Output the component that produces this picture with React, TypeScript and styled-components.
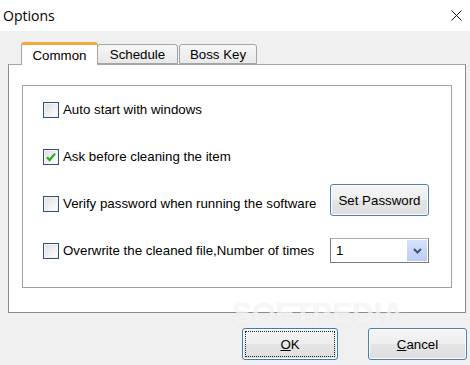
import React from "react";
import styled, { createGlobalStyle } from "styled-components";

const GlobalStyle = createGlobalStyle`
  html, body {
    margin: 0;
    padding: 0;
    background: #f0f0f0;
  }
  body {
    font-family: "Liberation Sans", Arial, sans-serif;
    font-size: 13.3px;
    color: #000;
  }
`;

const Window = styled.div`
  position: relative;
  width: 470px;
  height: 365px;
  display: flex;
  flex-direction: column;
  background: #f0f0f0;
  overflow: hidden;
`;

const TitleBar = styled.div`
  height: 31px;
  flex-shrink: 0;
  background: #fff;
  display: flex;
  align-items: center;
  justify-content: space-between;
  padding: 0 8px 0 3px;
`;

const Title = styled.span`
  font-family: "Open Sans", "Noto Sans", sans-serif;
  font-size: 14px;
  color: #000;
`;

const CloseBtn = styled.div`
  width: 12px;
  height: 12px;
  display: flex;
  align-items: center;
  justify-content: center;
`;

const Body = styled.div`
  flex: 1;
  display: flex;
  flex-direction: column;
  padding: 11px 4px 0 8px;
`;

const TabStrip = styled.div`
  display: flex;
  align-items: flex-end;
  height: 22px;
  padding-left: 13px;
  position: relative;
  z-index: 1;
`;

const Tab = styled.div<{ $active?: boolean; $w: number }>`
  box-sizing: border-box;
  height: ${(p) => (p.$active ? "23px" : "20px")};
  margin-bottom: ${(p) => (p.$active ? "-1px" : "0")};
  width: ${(p) => p.$w}px;
  display: flex;
  align-items: center;
  justify-content: center;
  border: 1px solid #a5a5a5;
  border-bottom: ${(p) => (p.$active ? "none" : "1px solid #a5a5a5")};
  border-top: ${(p) => (p.$active ? "3px solid #f4a93c" : "1px solid #a5a5a5")};
  border-radius: 3px 3px 0 0;
  background: ${(p) =>
    p.$active ? "#fff" : "linear-gradient(#f7f7f7, #e8e8e8)"};
  padding-top: ${(p) => (p.$active ? "0" : "1px")};
  margin-right: ${(p) => (p.$active ? "-1px" : "1px")};
`;

const Panel = styled.div`
  box-sizing: border-box;
  width: 458px;
  height: 249px;
  background: #fff;
  border: 1px solid #898c95;
  border-top-color: #a5a5a5;
  padding: 20px 13px 0 13px;
`;

const GroupBox = styled.div`
  box-sizing: border-box;
  width: 430px;
  height: 203px;
  border: 1px solid #a0a0a0;
  box-shadow: inset 1px 1px 0 #fff;
  display: flex;
  flex-direction: column;
  padding-left: 20px;
  padding-right: 22px;
`;

const Row = styled.div<{ $lift?: number }>`
  height: 47px;
  display: flex;
  align-items: center;
  justify-content: space-between;

  & > button {
    margin-top: ${(p) => -(p.$lift ?? 0)}px;
  }
`;

const CheckLabel = styled.label`
  display: flex;
  align-items: center;
  gap: 4px;
  white-space: nowrap;
`;

const Box = styled.span`
  box-sizing: border-box;
  width: 16px;
  height: 16px;
  border: 1px solid #33507a;
  background: linear-gradient(135deg, #dcdcdc, #f6f6f6 70%, #ffffff);
  box-shadow: inset 0 0 0 1px #f4f4f4;
  display: flex;
  align-items: center;
  justify-content: center;
`;

const PushButton = styled.button<{ $w: number; $focus?: boolean }>`
  box-sizing: border-box;
  width: ${(p) => p.$w}px;
  height: 32px;
  border: 1px solid ${(p) => (p.$focus ? "#3c7fb1" : "#4d7fb0")};
  border-radius: 3px;
  background: linear-gradient(#f5f5f5, #eeeeee 50%, #e5e5e5 51%, #dedede);
  box-shadow: inset 0 0 0 1px #fcfcfc;
  font-family: "Liberation Sans", Arial, sans-serif;
  font-size: 13.3px;
  color: #000;
  padding: 2px;
  display: flex;
  align-items: stretch;
  justify-content: stretch;
`;

const FocusRect = styled.span<{ $on?: boolean }>`
  flex: 1;
  display: flex;
  align-items: center;
  justify-content: center;
  border: 1px dotted ${(p) => (p.$on ? "#222" : "transparent")};
`;

const Combo = styled.div`
  box-sizing: border-box;
  width: 99px;
  height: 25px;
  border: 1px solid #7a7a7a;
  border-top-color: #abadb3;
  background: #fff;
  display: flex;
  align-items: stretch;
  padding: 1px;
`;

const ComboValue = styled.span`
  flex: 1;
  display: flex;
  align-items: center;
  padding-left: 4px;
`;

const ComboArrow = styled.span`
  width: 20px;
  display: flex;
  align-items: center;
  justify-content: center;
  background: linear-gradient(#d6e3fb, #b9cdf5);
`;

const Footer = styled.div`
  display: flex;
  justify-content: flex-end;
  gap: 30px;
  padding-top: 15px;
  margin-right: -1px;
`;

const Watermark = styled.div`
  position: absolute;
  left: 232px;
  top: 296px;
  font-family: "Liberation Sans", Arial, sans-serif;
  font-weight: bold;
  font-size: 30px;
  color: rgba(255, 255, 255, 0.6);
  text-shadow: 0 0 1px rgba(200, 200, 200, 0.4);
  pointer-events: none;
`;

const Check = () => (
  <svg width="12" height="12" viewBox="0 0 12 12">
    <path d="M2 6.2 L4.6 9 L10 2.6" fill="none" stroke="#2aa82a" strokeWidth="2.2" />
  </svg>
);

const CheckBox = ({ checked, children }: { checked?: boolean; children: React.ReactNode }) => (
  <CheckLabel>
    <Box>{checked && <Check />}</Box>
    <span>{children}</span>
  </CheckLabel>
);

export default function App() {
  return (
    <>
      <GlobalStyle />
      <Window>
        <TitleBar>
          <Title>Options</Title>
          <CloseBtn>
            <svg width="11" height="11" viewBox="0 0 11 11">
              <path d="M0.5 0.5 L10.5 10.5 M10.5 0.5 L0.5 10.5" stroke="#111" strokeWidth="1" />
            </svg>
          </CloseBtn>
        </TitleBar>
        <Body>
          <TabStrip>
            <Tab $active $w={77}>Common</Tab>
            <Tab $w={81}>Schedule</Tab>
            <Tab $w={78}>Boss Key</Tab>
          </TabStrip>
          <Panel>
            <GroupBox>
              <Row>
                <CheckBox>Auto start with windows</CheckBox>
              </Row>
              <Row>
                <CheckBox checked>Ask before cleaning the item</CheckBox>
              </Row>
              <Row $lift={7}>
                <CheckBox>Verify password when running the software</CheckBox>
                <PushButton $w={99}>
                  <FocusRect>Set Password</FocusRect>
                </PushButton>
              </Row>
              <Row>
                <CheckBox>Overwrite the cleaned file,Number of times</CheckBox>
                <Combo>
                  <ComboValue>1</ComboValue>
                  <ComboArrow>
                    <svg width="9" height="6" viewBox="0 0 9 6">
                      <path d="M1 1 L4.5 4.5 L8 1" fill="none" stroke="#3d5579" strokeWidth="2" />
                    </svg>
                  </ComboArrow>
                </Combo>
              </Row>
            </GroupBox>
          </Panel>
          <Footer>
            <PushButton $w={96} $focus>
              <FocusRect $on>
                <u>O</u>K
              </FocusRect>
            </PushButton>
            <PushButton $w={99}>
              <FocusRect>
                <u>C</u>ancel
              </FocusRect>
            </PushButton>
          </Footer>
        </Body>
        <Watermark>SOFTPEDIA</Watermark>
      </Window>
    </>
  );
}
